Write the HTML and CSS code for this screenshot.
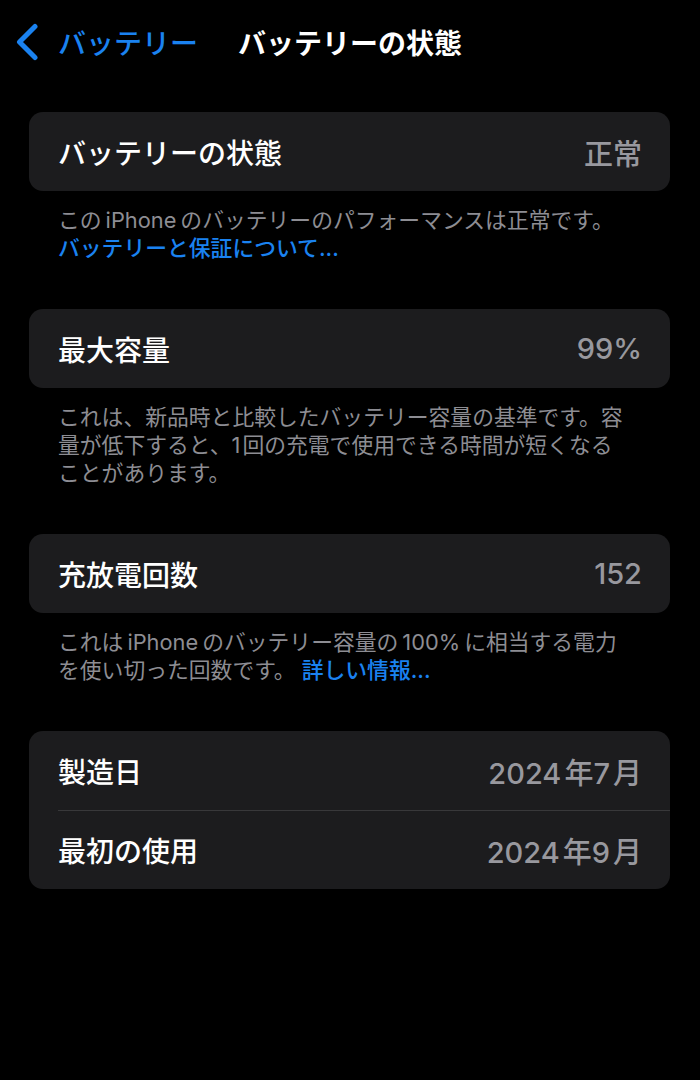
FILE: index.html
```html
<!DOCTYPE html>
<html lang="ja">
<head>
<meta charset="utf-8">
<link rel="stylesheet" href="styles.css">
</head>
<body>
<header class="nav">
  <a class="back">
    <svg class="chev" viewBox="0 0 26 38" width="26" height="38"><path d="M21 3.5 L5.5 19 L21 34.5" fill="none" stroke="#1a82f0" stroke-width="5" stroke-linecap="round" stroke-linejoin="round"/></svg>
    <span class="back-label">バッテリー</span>
  </a>
  <h1 class="title">バッテリーの状態</h1>
</header>

<section class="group">
  <div class="card">
    <div class="row"><span class="label">バッテリーの状態</span><span class="value">正常</span></div>
  </div>
  <p class="note">この<span class="lat">iPhone</span>のバッテリーのパフォーマンスは正常です。<br><a class="link">バッテリーと保証について...</a></p>
</section>

<section class="group">
  <div class="card">
    <div class="row"><span class="label">最大容量</span><span class="value">99%</span></div>
  </div>
  <p class="note">これは、新品時と比較したバッテリー容量の基準です。容<br>量が低下すると、<span class="lat lat-r">1</span>回の充電で使用できる時間が短くなる<br>ことがあります。</p>
</section>

<section class="group">
  <div class="card">
    <div class="row"><span class="label">充放電回数</span><span class="value">152</span></div>
  </div>
  <p class="note">これは<span class="lat">iPhone</span>のバッテリー容量の<span class="lat">100%</span>に相当する電力<br>を使い切った回数です。 <a class="link">詳しい情報...</a></p>
</section>

<section class="group">
  <div class="card">
    <div class="row"><span class="label">製造日</span><span class="value"><span class="num">2024</span>年<span class="num">7</span>月</span></div>
    <div class="row sep"><span class="label">最初の使用</span><span class="value"><span class="num">2024</span>年<span class="num">9</span>月</span></div>
  </div>
</section>
</body>
</html>
```

FILE: styles.css
```css
html, body {
  margin: 0;
  padding: 0;
  background: #000;
  font-family: "Inter", "Noto Sans CJK JP", sans-serif;
  color: #fff;
}

.nav {
  display: flex;
  align-items: center;
  height: 84px;
  padding: 0 0 0 14px;
  box-sizing: border-box;
}

.back {
  display: flex;
  align-items: center;
  gap: 18px;
  color: #1a82f0;
}

.chev {
  display: block;
}

.back-label {
  font-size: 28px;
  font-weight: 500;
}

.title {
  margin: 0 0 0 40px;
  font-size: 28px;
  font-weight: 700;
}

.group {
  margin: 0 30px 0 29px;
}

.group + .group {
  margin-top: 47px;
}

.group:first-of-type {
  margin-top: 28px;
}

.card {
  background: #1c1c1e;
  border-radius: 14px;
  overflow: hidden;
}

.row {
  display: flex;
  justify-content: space-between;
  align-items: center;
  height: 79px;
  padding: 0 28px 0 29px;
  position: relative;
}

.row.sep::before {
  content: "";
  position: absolute;
  left: 29px;
  right: 0;
  top: 0;
  border-top: 1px solid #38383a;
}

.label {
  font-size: 28px;
  font-weight: 500;
  color: #fff;
}

.value {
  font-size: 29px;
  font-weight: 500;
  color: #98989e;
}

.num {
  margin-right: 3px;
}

.note {
  margin: 0;
  padding: 15px 29px 0;
  font-size: 21.8px;
  line-height: 28px;
  color: #8d8d93;
}

.lat {
  margin: 0 4px;
}

.lat-r {
  margin: 0 2px 0 0;
}

.link {
  color: #1a82f0;
  font-weight: 500;
}
```
